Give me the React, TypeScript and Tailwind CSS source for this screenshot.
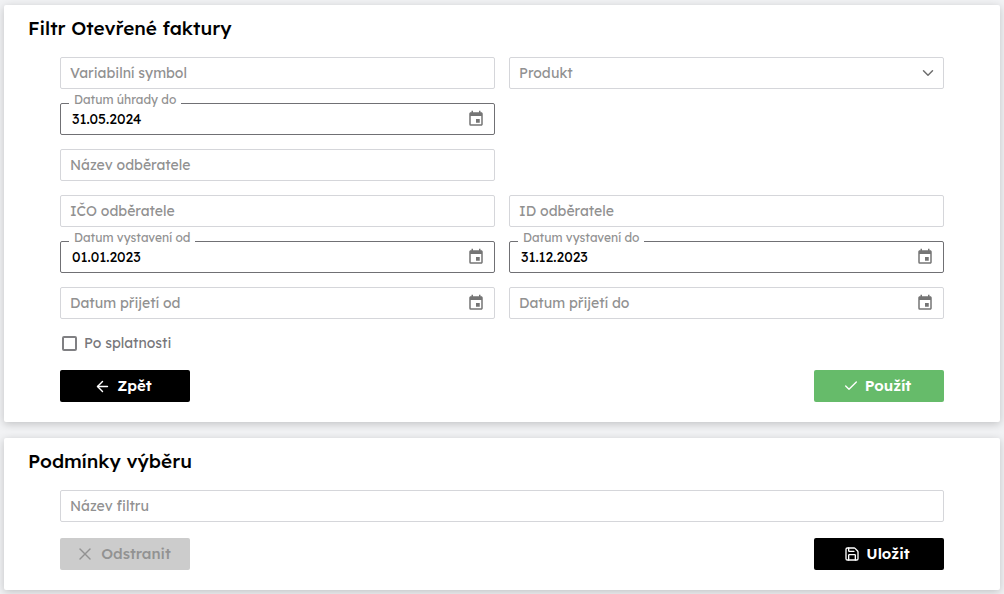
import { useState } from 'react';
import type { ReactNode } from 'react';
import { ArrowLeft, Check, ChevronDown, Save, X } from 'lucide-react';
import { MdEvent } from 'react-icons/md';

const box =
  'h-8 w-full rounded-xs border bg-white px-[9px] text-sm outline-none placeholder:text-[#919191] placeholder:opacity-100 focus:border-[#606064]';

function Card({ id, title, children }: { id: string; title: string; children: ReactNode }) {
  return (
    <section
      aria-labelledby={id}
      className="rounded-xs bg-white pt-[11px] pb-5 shadow-[0_2px_8px_rgba(0,0,0,0.2)]"
    >
      <h2 id={id} className="px-6 text-[19px] leading-6 font-medium text-black">
        {title}
      </h2>
      <div className="px-14 pt-[17px]">{children}</div>
    </section>
  );
}

function TextField({ label }: { label: string }) {
  return <input type="text" aria-label={label} placeholder={label} className={`${box} border-[#d5d6da]`} />;
}

function SelectField({ label }: { label: string }) {
  return (
    <div className="relative">
      <select aria-label={label} className={`${box} block appearance-none border-[#d5d6da] text-[#919191]`}>
        <option>{label}</option>
      </select>
      <ChevronDown
        aria-hidden="true"
        size={18}
        strokeWidth={2}
        className="pointer-events-none absolute top-[7px] right-[7px] text-[#6e6e6e]"
      />
    </div>
  );
}

function DateField({ id, label, initial = '' }: { id: string; label: string; initial?: string }) {
  const [value, setValue] = useState(initial);
  const filled = value !== '';
  return (
    <div className="relative">
      <input
        id={id}
        type="text"
        value={value}
        aria-label={label}
        placeholder={label}
        onChange={(event) => setValue(event.target.value)}
        className={
          filled
            ? 'block h-8 w-full rounded-xs border border-[#707074] bg-white pr-9 pl-[11px] text-sm font-normal text-black outline-none'
            : `${box} block border-[#d5d6da]`
        }
      />
      {filled && (
        <label
          htmlFor={id}
          className="absolute -top-[11px] left-[9px] bg-white px-[5px] text-xs leading-4 text-[#919191]"
        >
          {label}
        </label>
      )}
      <button
        type="button"
        aria-label={`Vybrat: ${label}`}
        className="absolute top-[7px] right-[10px] text-[#757575]"
      >
        <MdEvent size={18} />
      </button>
    </div>
  );
}

const button = 'flex h-8 w-[130px] items-center justify-center gap-1.5 rounded-xs pr-1 text-[15px]';

export default function App() {
  return (
    <main className="flex min-h-screen flex-col gap-4 bg-[#f1f2f4] px-1 pt-[5px] pb-1 font-['Lexend','Inter',sans-serif]">
      <Card id="filter-title" title="Filtr Otevřené faktury">
        <form onSubmit={(event) => event.preventDefault()}>
          <div className="grid grid-cols-2 gap-[14px]">
            <TextField label="Variabilní symbol" />
            <SelectField label="Produkt" />
            <DateField id="paid-to" label="Datum úhrady do" initial="31.05.2024" />
            <div className="col-start-1">
              <TextField label="Název odběratele" />
            </div>
            <div className="col-start-1">
              <TextField label="IČO odběratele" />
            </div>
            <TextField label="ID odběratele" />
            <DateField id="issued-from" label="Datum vystavení od" initial="01.01.2023" />
            <DateField id="issued-to" label="Datum vystavení do" initial="31.12.2023" />
            <DateField id="received-from" label="Datum přijetí od" />
            <DateField id="received-to" label="Datum přijetí do" />
          </div>
          <label className="mt-[14px] flex w-fit items-center gap-[7px] pl-[2px] text-sm leading-5 text-[#77777a]">
            <input
              type="checkbox"
              className="size-[15px] appearance-none rounded-xs border-2 border-[#808083] bg-white checked:bg-[#808083]"
            />
            Po splatnosti
          </label>
          <div className="mt-[17px] flex justify-between">
            <button type="button" className={`${button} bg-black font-semibold text-white`}>
              <ArrowLeft size={17} strokeWidth={2} aria-hidden="true" />
              Zpět
            </button>
            <button type="submit" className={`${button} bg-[#66bb6a] font-semibold text-white`}>
              <Check size={16} strokeWidth={2} aria-hidden="true" />
              Použít
            </button>
          </div>
        </form>
      </Card>

      <Card id="conditions-title" title="Podmínky výběru">
        <form onSubmit={(event) => event.preventDefault()}>
          <TextField label="Název filtru" />
          <div className="mt-4 flex justify-between">
            <button type="button" disabled className={`${button} bg-[#cccccc] font-medium text-[#929292]`}>
              <X size={20} strokeWidth={1.75} aria-hidden="true" />
              Odstranit
            </button>
            <button type="submit" className={`${button} bg-black font-semibold text-white`}>
              <Save size={16} strokeWidth={2} aria-hidden="true" />
              Uložit
            </button>
          </div>
        </form>
      </Card>
    </main>
  );
}
